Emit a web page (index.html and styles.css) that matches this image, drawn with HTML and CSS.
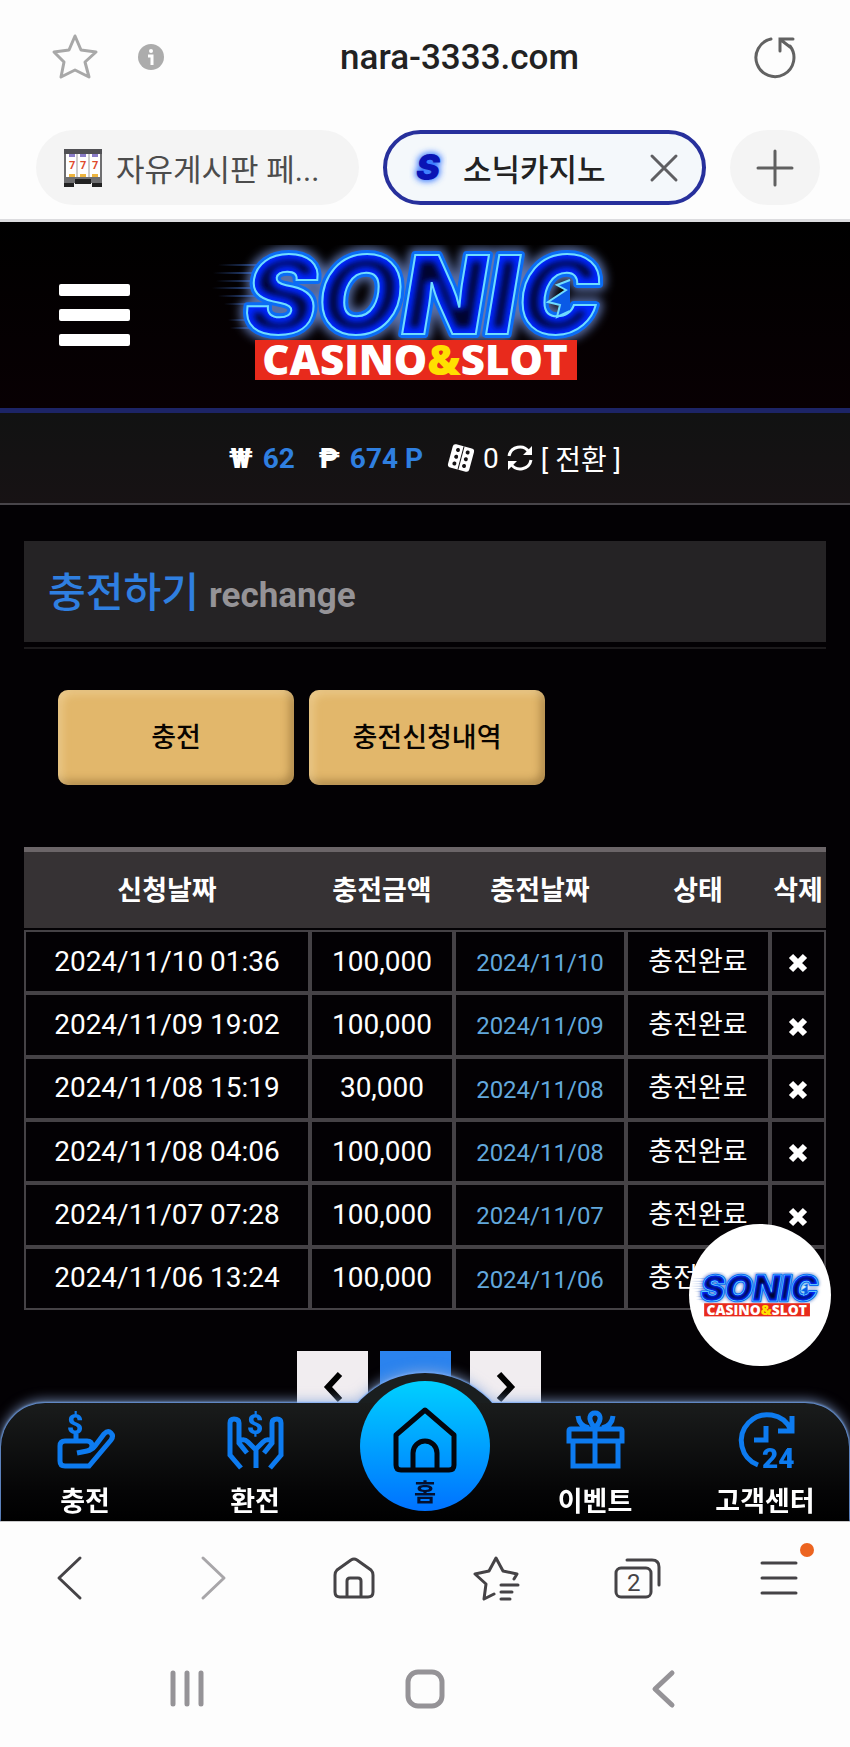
FILE: index.html
```html
<!DOCTYPE html>
<html lang="ko">
<head>
    <meta charset="UTF-8">
    <meta name="viewport" content="width=device-width, initial-scale=1.0">
    <title>소닉카지노</title>
    <link rel="stylesheet" href="styles.css">
</head>
<body>
    <!-- shared logo -->
    <svg class="defs" width="0" height="0" aria-hidden="true">
        <defs>
            <filter id="blur3" x="-20%" y="-20%" width="140%" height="140%"><feGaussianBlur stdDeviation="3"/></filter>
            <filter id="blur5" x="-20%" y="-30%" width="140%" height="160%"><feGaussianBlur stdDeviation="5"/></filter>
            <clipPath id="sonicClip"><text class="logo-sonic" x="212" y="89" text-anchor="middle">SONIC</text></clipPath>
            <linearGradient id="speed" x1="0" x2="1" y1="0" y2="0">
                <stop offset="0" stop-color="#3c64b4" stop-opacity="0"/>
                <stop offset="1" stop-color="#3c78e6"/>
            </linearGradient>
            <symbol id="logo" viewBox="0 0 430 140">
                <text class="logo-sonic" x="212" y="89" text-anchor="middle" fill="none" stroke="#6f8ccf" stroke-opacity="0.8" stroke-width="14" stroke-linejoin="round" filter="url(#blur5)">SONIC</text>
                <g fill="url(#speed)">
                    <rect x="8" y="19" width="60" height="2"/>
                    <rect x="3" y="27" width="60" height="2"/>
                    <rect x="6" y="35" width="60" height="2"/>
                    <rect x="2" y="42" width="60" height="2"/>
                    <rect x="8" y="50" width="50" height="2"/>
                    <rect x="14" y="58" width="40" height="2"/>
                    <rect x="18" y="74" width="30" height="2"/>
                    <rect x="20" y="82" width="30" height="2"/>
                </g>
                <text class="logo-sonic" x="212" y="89" text-anchor="middle" fill="#0a5ae6" stroke="#0a6cf5" stroke-width="8" stroke-linejoin="round">SONIC</text>
                <g clip-path="url(#sonicClip)">
                    <rect width="430" height="100" fill="#000430"/>
                    <text class="logo-sonic" x="212" y="89" text-anchor="middle" fill="none" stroke="#0026ff" stroke-width="13" filter="url(#blur3)">SONIC</text>
                </g>
                <text class="logo-sonic" x="212" y="89" text-anchor="middle" fill="none" stroke="#6fdcff" stroke-width="2">SONIC</text>
                <path d="M360 35L347 40L356 45L338 57L350 60L347 72L360 66" fill="#0a5ae6" stroke="#6fdcff" stroke-width="2"/>
                <rect x="45" y="95" width="322" height="40" fill="#e82a1c"/>
                <text class="logo-sub" x="205" y="130" text-anchor="middle" fill="#fff">CASINO<tspan fill="#ffe000">&amp;</tspan>SLOT</text>
            </symbol>
            <symbol id="cross" viewBox="0 0 20 20">
                <path d="M3 3l14 14M17 3L3 17" stroke="#fff" stroke-width="6" fill="none"/>
            </symbol>
        </defs>
    </svg>

    <header class="browser-top">
        <div class="url-bar">
            <button class="icon-btn" aria-label="즐겨찾기">
                <svg width="46" height="46" viewBox="0 0 46 46" fill="none" stroke="#a8a8a8" stroke-width="3" stroke-linejoin="round"><path d="M23 2l6 14 15 2-11 10 4 15-14-7-14 7 3-15L2 18l15-2z"/></svg>
            </button>
            <button class="icon-btn info" aria-label="사이트 정보">
                <svg width="27" height="27" viewBox="0 0 27 27"><circle cx="13" cy="13" r="13" fill="#acacac"/><circle cx="13" cy="7" r="2" fill="#fff"/><path d="M10 12h4v9" stroke="#fff" stroke-width="3" fill="none"/></svg>
            </button>
            <input class="url" type="text" value="nara-3333.com" aria-label="주소">
            <button class="icon-btn" aria-label="새로고침">
                <svg width="43" height="43" viewBox="0 0 43 43" fill="none" stroke="#626262" stroke-width="3" stroke-linecap="round"><path d="M17 3a19 19 0 1 0 19 7"/><path d="M26 15V3h13M27 4l9 7"/></svg>
            </button>
        </div>
        <div class="tabs">
            <button class="tab">
                <svg width="38" height="38" viewBox="0 0 38 38">
                    <rect width="38" height="34" fill="#6e6e70"/><rect width="38" height="5" fill="#505054"/>
                    <rect x="2" y="5" width="34" height="23" fill="#fff"/>
                    <path d="M5 5h6v3H5zM16 5h6v3h-6zM28 5h6v3h-6z" fill="#8a7cc8"/>
                    <path d="M5 25h6v3H5zM16 25h6v3h-6zM28 25h6v3h-6z" fill="#eeb640"/>
                    <path d="M13 5v23M25 5v23" stroke="#999" stroke-width="1"/>
                    <g class="seven"><text x="5" y="20">7</text><text x="16" y="20">7</text><text x="28" y="20">7</text></g>
                    <path d="M0 34h10v4H0zM28 34h10v4H28zM11 30h16v5H11z" fill="#222"/>
                </svg>
                <span>자유게시판 페...</span>
            </button>
            <div class="tab active">
                <svg width="38" height="44" viewBox="0 0 38 44"><g class="fav-s"><text x="5" y="34" fill="#3a8cff" stroke="#2f6cff" stroke-width="3" filter="url(#blur3)">S</text><text x="5" y="34" fill="#0a14b4">S</text></g></svg>
                <span>소닉카지노</span>
                <button class="icon-btn close" aria-label="탭 닫기">
                    <svg width="28" height="28" viewBox="0 0 28 28" fill="none" stroke="#5f5f62" stroke-width="3" stroke-linecap="round"><path d="M2 2l24 24M26 2L2 26"/></svg>
                </button>
            </div>
            <button class="new-tab" aria-label="새 탭">
                <svg width="38" height="38" viewBox="0 0 38 38" fill="none" stroke="#606060" stroke-width="3" stroke-linecap="round"><path d="M19 2v34M2 19h34"/></svg>
            </button>
        </div>
    </header>

    <div class="site">
        <div class="site-header">
            <button class="menu-btn" aria-label="메뉴"><i></i><i></i><i></i></button>
            <a href="#" class="logo" aria-label="SONIC CASINO&amp;SLOT"><svg width="430" height="140"><use href="#logo"/></svg></a>
        </div>

        <div class="balance">
            <span class="money"><b>₩</b> <em>62</em></span>
            <span class="money"><b>₱</b> <em>674 P</em></span>
            <a href="#" class="convert">
                <svg width="28" height="28" viewBox="0 0 28 28"><g transform="rotate(15 14 14)"><rect x="3" y="2" width="22" height="24" rx="3" fill="#fff"/><path d="M14 2v24" stroke="#141214" stroke-width="1"/><g fill="#141214"><circle cx="9" cy="7" r="2"/><circle cx="9" cy="14" r="2"/><circle cx="9" cy="21" r="2"/><circle cx="19" cy="7" r="2"/><circle cx="19" cy="14" r="2"/><circle cx="19" cy="21" r="2"/></g></g></svg>
                <span>0</span>
                <svg width="26" height="26" viewBox="0 0 26 26" fill="none" stroke="#fff" stroke-width="3"><path d="M2 11a11 11 0 0 1 20-4M24 15a11 11 0 0 1-20 4"/><path d="M25 1v9h-9zM1 25v-9h9z" fill="#fff" stroke="none"/></svg>
                <span>[ 전환 ]</span>
            </a>
        </div>

        <main class="content">
            <div class="title"><h1>충전하기 <small>rechange</small></h1></div>
            <div class="actions">
                <button>충전</button>
                <button>충전신청내역</button>
            </div>

            <table class="history">
                <colgroup><col><col class="c-amount"><col class="c-date"><col class="c-state"><col class="c-del"></colgroup>
                <thead>
                    <tr><th>신청날짜</th><th>충전금액</th><th>충전날짜</th><th>상태</th><th>삭제</th></tr>
                </thead>
                <tbody>
                    <tr><td>2024/11/10 01:36</td><td>100,000</td><td class="date">2024/11/10</td><td>충전완료</td><td><button aria-label="삭제"><svg width="20" height="20"><use href="#cross"/></svg></button></td></tr>
                    <tr><td>2024/11/09 19:02</td><td>100,000</td><td class="date">2024/11/09</td><td>충전완료</td><td><button aria-label="삭제"><svg width="20" height="20"><use href="#cross"/></svg></button></td></tr>
                    <tr><td>2024/11/08 15:19</td><td>30,000</td><td class="date">2024/11/08</td><td>충전완료</td><td><button aria-label="삭제"><svg width="20" height="20"><use href="#cross"/></svg></button></td></tr>
                    <tr><td>2024/11/08 04:06</td><td>100,000</td><td class="date">2024/11/08</td><td>충전완료</td><td><button aria-label="삭제"><svg width="20" height="20"><use href="#cross"/></svg></button></td></tr>
                    <tr><td>2024/11/07 07:28</td><td>100,000</td><td class="date">2024/11/07</td><td>충전완료</td><td><button aria-label="삭제"><svg width="20" height="20"><use href="#cross"/></svg></button></td></tr>
                    <tr><td>2024/11/06 13:24</td><td>100,000</td><td class="date">2024/11/06</td><td>충전완료</td><td><button aria-label="삭제"><svg width="20" height="20"><use href="#cross"/></svg></button></td></tr>
                </tbody>
            </table>

            <div class="pages">
                <button aria-label="이전"><svg width="20" height="32" viewBox="0 0 20 32" fill="none" stroke="#000" stroke-width="6"><path d="M17 3L5 16l12 13"/></svg></button>
                <button class="current" aria-label="현재 페이지"></button>
                <button aria-label="다음"><svg width="20" height="32" viewBox="0 0 20 32" fill="none" stroke="#000" stroke-width="6"><path d="M3 3l12 13L3 29"/></svg></button>
            </div>
        </main>

        <a href="#" class="float-badge" aria-label="SONIC CASINO&amp;SLOT"><svg width="142" height="46"><use href="#logo"/></svg></a>

        <nav class="dock">
            <div class="dock-bg"><div class="bump"></div><div class="bar"></div></div>
            <a href="#">
                <svg width="57" height="58" viewBox="0 0 57 58"><path d="M19 23v7M20 42l10-2q5-1 8-5l9-12q4-4 7-1 3 3 0 7L32 55H8q-5 0-5-5V35q0-5 5-5h22q5 0 5 5 0 4-5 5"/><text x="10" y="23">$</text></svg>
                <span>충전</span>
            </a>
            <a href="#">
                <svg width="57" height="58" viewBox="0 0 57 58"><path d="M14 57L3 44V12q0-4 4-4 5 0 5 4v20l8 10M12 30q5-3 9 1l8 8v18M43 57l11-13V12q0-4-4-4-5 0-5 4v20l-8 10M45 30q-5-3-9 1l-7 7"/><text x="20" y="23">$</text></svg>
                <span>환전</span>
            </a>
            <a href="#" class="home">
                <div class="disc">
                    <svg width="66" height="66" viewBox="0 0 64 66"><path d="M3 28L32 3l29 25v30q0 5-5 5H8q-5 0-5-5zM20 63V46a12 12 0 0 1 24 0v17"/></svg>
                    <span>홈</span>
                </div>
            </a>
            <a href="#">
                <svg width="57" height="58" viewBox="0 0 57 58"><path d="M2 30V20q0-2 2-2h49q2 0 2 2v10zM6 31v24h45V31M28 18v37M28 17q-6-7-5-11 1-4 5-4t5 4q1 4-5 11zM11 5q1 10 11 12M46 5q-1 10-11 12"/></svg>
                <span>이벤트</span>
            </a>
            <a href="#">
                <svg width="57" height="58" viewBox="0 0 57 58"><path d="M21 54A26 26 0 1 1 54 19M55 5v15H41M29 15v14H17"/><text x="25" y="57">24</text></svg>
                <span>고객센터</span>
            </a>
        </nav>
    </div>

    <footer class="browser-bottom">
        <div class="toolbar">
            <button aria-label="뒤로"><svg width="46" height="46" viewBox="0 0 46 46"><path d="M32 2L11 22l21 20"/></svg></button>
            <button class="off" aria-label="앞으로"><svg width="46" height="46" viewBox="0 0 46 46"><path d="M14 2l21 20-21 20"/></svg></button>
            <button aria-label="홈"><svg width="46" height="46" viewBox="0 0 46 46"><path d="M4 19q0-3 2-5L20 4q3-2 6 0l14 10q2 2 2 5v17q0 5-5 5H9q-5 0-5-5zM16 41V25q0-3 3-3h8q3 0 3 3v16"/></svg></button>
            <button aria-label="북마크"><svg width="46" height="46" viewBox="0 0 46 46"><path d="M21 38l-10 5 2-15L2 18l14-3 7-13 7 13 14 3-3 5M28 29h17M28 36h11M28 43h9"/></svg></button>
            <button aria-label="탭"><svg width="50" height="46" viewBox="0 0 50 46"><rect x="4" y="12" width="35" height="29" rx="5"/><path d="M15 4h25q7 0 7 7v18"/><text x="15" y="35">2</text></svg></button>
            <button class="menu" aria-label="더보기"><svg width="46" height="46" viewBox="0 0 46 46"><path d="M6 7h34M6 22h34M6 37h34"/></svg></button>
        </div>
        <div class="system">
            <button aria-label="최근 앱"><svg width="42" height="42" viewBox="0 0 42 42"><path d="M7 5v31M21 5v31M35 5v31"/></svg></button>
            <button aria-label="홈"><svg width="42" height="42" viewBox="0 0 42 42"><rect x="4" y="4" width="34" height="34" rx="10"/></svg></button>
            <button aria-label="뒤로"><svg width="42" height="42" viewBox="0 0 42 42"><path d="M30 5L13 21l17 16"/></svg></button>
        </div>
    </footer>
</body>
</html>
```
FILE: styles.css
```css
* {
    box-sizing: border-box;
}
body {
    margin: 0;
    font-family: Roboto, "Noto Sans CJK KR", sans-serif;
    font-size: 28px;
    background: #fdfdfd;
}
button {
    font-family: inherit;
    padding: 0;
    border: none;
    background: none;
    cursor: pointer;
}
a {
    color: inherit;
    text-decoration: none;
}
svg {
    display: block;
    flex: none;
    overflow: visible;
}
.defs {
    position: absolute;
}
.logo-sonic {
    font: italic 900 109px Inter, sans-serif;
}
.logo-sub {
    font: 800 42px "Open Sans", sans-serif;
}

/* browser top */
.browser-top {
    border-bottom: 3px solid #dcdcdf;
}
.url-bar {
    display: flex;
    align-items: center;
    height: 114px;
    padding: 0 53px 0 52px;
}
.info {
    margin-left: 40px;
}
.url {
    flex: 1;
    min-width: 0;
    border: none;
    background: none;
    text-align: center;
    font: 500 35px Roboto, sans-serif;
    color: #222;
}
.tabs {
    display: flex;
    gap: 24px;
    padding: 16px 30px 14px 36px;
}
.tab {
    flex: 1 1 0;
    width: 0;
    display: flex;
    align-items: center;
    gap: 14px;
    height: 75px;
    padding: 0 28px;
    border-radius: 38px;
    background: #f4f4f4;
    color: #4c4c4c;
    font-size: 31px;
    white-space: nowrap;
}
.tab.active {
    padding: 0 24px;
    border: 4px solid #27309c;
    background: #f4f8fb;
    color: #222;
    font-weight: 500;
}
.close {
    margin-left: auto;
}
.seven {
    font: bold 11px Roboto, sans-serif;
    fill: #e0492c;
}
.fav-s {
    font: italic 900 36px Inter, sans-serif;
}
.new-tab {
    width: 90px;
    height: 75px;
    border-radius: 38px;
    background: #f4f4f4;
    display: flex;
    align-items: center;
    justify-content: center;
}

/* site */
.site {
    position: relative;
    overflow: hidden;
    background: #030104;
    color: #fff;
    padding-bottom: 99px;
}
.site-header {
    display: grid;
    grid-template-columns: 1fr auto 1fr;
    align-items: center;
    height: 191px;
    background: linear-gradient(#000, #080003);
    border-bottom: 5px solid #1c2466;
}
.menu-btn {
    display: grid;
    gap: 13px;
    width: 71px;
    margin-left: 59px;
}
.menu-btn i {
    height: 12px;
    border-radius: 2px;
    background: #fff;
}
.balance {
    display: flex;
    align-items: center;
    justify-content: center;
    gap: 24px;
    height: 92px;
    background: linear-gradient(#111212, #171214);
    border-bottom: 2px solid #48454a;
}
.money {
    font-weight: bold;
}
.money em {
    margin-left: 3px;
    font-style: normal;
    color: #2f7fe0;
}
.convert {
    display: flex;
    align-items: center;
    gap: 8px;
}

.content {
    padding: 36px 24px 0;
}
.title {
    border-bottom: 2px solid #1c1a1c;
    padding-bottom: 5px;
}
.title h1 {
    margin: 0;
    height: 101px;
    padding: 2px 24px 0;
    line-height: 101px;
    font-size: 41px;
    font-weight: 500;
    color: #2f7fe0;
    background: #252325;
}
.title small {
    font-size: 35px;
    font-weight: bold;
    color: #959397;
}
.actions {
    display: flex;
    gap: 15px;
    padding: 41px 34px 62px;
}
.actions button {
    width: 236px;
    height: 95px;
    padding-bottom: 4px;
    border-radius: 10px;
    background: #e2b76b;
    box-shadow: inset 4px 4px 8px rgba(255, 235, 190, 0.4), inset -4px -4px 8px rgba(90, 60, 20, 0.4);
    font-size: 27px;
    font-weight: 500;
    color: #080400;
}

.history {
    width: 100%;
    height: 463px;
    table-layout: fixed;
    border-collapse: separate;
    border-spacing: 0;
    text-align: center;
    white-space: nowrap;
}
.c-amount,
.c-state {
    width: 144px;
}
.c-date {
    width: 172px;
}
.c-del {
    width: 56px;
}
.history th {
    height: 83px;
    padding: 0 0 4px;
    font-size: 27px;
    font-weight: bold;
    background: #363234;
    border-top: 5px solid #6b6568;
    border-bottom: 2px solid #030104;
}
.history td {
    height: 63px;
    padding: 0;
    line-height: 40px;
    border: 2px solid #454246;
}
.history td:nth-child(4) {
    font-size: 27px;
}
.history td.date {
    padding-top: 3px;
    font-size: 24px;
    color: #62a8dc;
}
.history td button {
    display: inline-block;
    vertical-align: middle;
}

.pages {
    display: flex;
    justify-content: center;
    padding: 41px 12px 0 0;
}
.pages button {
    display: flex;
    align-items: center;
    justify-content: center;
    width: 71px;
    height: 71px;
    background: #f1edf0;
}
.pages .current {
    margin: 0 19px 0 12px;
    background: #2b83ee;
}

.float-badge {
    position: absolute;
    right: 19px;
    bottom: 155px;
    width: 142px;
    height: 142px;
    border-radius: 50%;
    background: #fff;
    display: flex;
    align-items: center;
    justify-content: center;
}

/* dock over the bottom of the page */
.dock {
    position: absolute;
    left: 0;
    right: 0;
    bottom: 0;
    height: 118px;
    display: grid;
    grid-template-columns: repeat(5, 1fr);
    font-size: 27px;
    font-weight: bold;
}
.dock-bg {
    position: absolute;
    inset: 0 1px;
    filter: drop-shadow(0 0 1px #4a8cf0) drop-shadow(0 0 1px #9cc4ff) drop-shadow(0 -2px 6px rgba(140, 170, 220, 0.7));
}
.bar {
    position: absolute;
    inset: 0;
    border-radius: 44px 44px 0 0;
    background: linear-gradient(#1a1c1c, #050506 75%, #000);
}
.bump {
    position: absolute;
    top: -30px;
    left: 50%;
    width: 180px;
    height: 180px;
    margin-left: -90px;
    border-radius: 50%;
    background: #1a1e1f;
}
.dock a {
    position: relative;
    display: flex;
    flex-direction: column;
    align-items: center;
    padding-top: 8px;
    line-height: 34px;
    white-space: nowrap;
}
.dock a svg {
    fill: none;
    stroke: #0d7bf0;
    stroke-width: 5;
    margin-bottom: 16px;
}
.dock a svg text {
    fill: #0d7bf0;
    stroke: none;
    font: 900 28px Roboto, sans-serif;
}
.dock .disc {
    position: absolute;
    top: -22px;
    width: 130px;
    height: 130px;
    padding-top: 26px;
    border-radius: 50%;
    background: linear-gradient(#00d0ff, #0072ff);
    color: #04102e;
    font-size: 24px;
    display: flex;
    flex-direction: column;
    align-items: center;
}
.dock .disc svg {
    stroke: #02060e;
    stroke-linejoin: round;
    margin-bottom: 3px;
}

/* browser bottom */
.browser-bottom {
    border-top: 1px solid #c8c8ca;
    height: 226px;
}
.toolbar,
.system {
    display: grid;
    align-items: center;
    justify-items: center;
    fill: none;
    stroke-linecap: round;
    stroke-linejoin: round;
}
.toolbar {
    grid-template-columns: repeat(6, 1fr);
    height: 113px;
    stroke: #454346;
    stroke-width: 3;
}
.toolbar .off {
    stroke: #a8a6a9;
}
.toolbar text {
    font: 24px Roboto, sans-serif;
    fill: #454346;
    stroke: none;
}
.toolbar .menu {
    position: relative;
}
.menu::after {
    content: "";
    position: absolute;
    top: -13px;
    right: -12px;
    width: 14px;
    height: 14px;
    border-radius: 50%;
    background: #ec6420;
}
.system {
    grid-template-columns: repeat(3, 1fr);
    height: 107px;
    padding: 0 8%;
    stroke: #959397;
    stroke-width: 5;
}
```
